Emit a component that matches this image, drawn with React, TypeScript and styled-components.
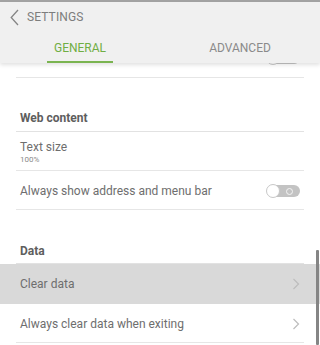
import React from "react";
import styled, { createGlobalStyle } from "styled-components";

const Global = createGlobalStyle`
  html, body { margin: 0; padding: 0; background: #ffffff; }
  body { width: 320px; height: 345px; overflow: hidden; font-family: Roboto, "Noto Sans", Arial, sans-serif; }
  * { box-sizing: border-box; }
`;

const Screen = styled.div`
  position: relative;
  width: 320px;
  height: 345px;
  display: flex;
  flex-direction: column;
  overflow: hidden;
  background: #ffffff;
`;

const StatusEdge = styled.div`
  height: 2px;
  background: #a3a3a3;
  flex: none;
`;

const Header = styled.header`
  position: relative;
  z-index: 2;
  flex: none;
  height: 61px;
  background: #f0f0f0;
  display: flex;
  flex-direction: column;
  box-shadow: 0 2px 4px rgba(0, 0, 0, 0.12);
`;

const TitleBar = styled.div`
  height: 30px;
  display: flex;
  align-items: center;
  padding-left: 10px;
  gap: 8px;
  color: #7d7d7d;
  font-size: 12px;
  letter-spacing: 0.1px;
`;

const Tabs = styled.nav`
  flex: 1;
  display: grid;
  grid-template-columns: 1fr 1fr;
`;

const Tab = styled.div`
  display: flex;
  justify-content: center;
`;

const TabLabel = styled.span<{ $active?: boolean }>`
  display: flex;
  align-items: center;
  padding: 2px 7px 0;
  font-size: 12px;
  color: ${(p) => (p.$active ? "#70ae44" : "#8a8a8a")};
  border-bottom: 2px solid ${(p) => (p.$active ? "#7ab450" : "transparent")};
`;

const List = styled.main`
  flex: 1;
  display: flex;
  flex-direction: column;
  overflow: hidden;
`;

const Row = styled.div<{ $highlight?: boolean }>`
  flex: none;
  background: ${(p) => (p.$highlight ? "#d9d9d9" : "transparent")};
  display: flex;
  padding-right: 4px;
`;

const RowInner = styled.div<{ $height: number; $noBorder?: boolean; $clip?: boolean }>`
  flex: 1;
  margin: 0 12px 0 16px;
  padding: ${(p) => (p.$clip ? "0" : p.$noBorder ? "1px" : "2px")} 4px 0;
  height: ${(p) => p.$height}px;
  display: flex;
  align-items: ${(p) => (p.$clip ? "flex-end" : "center")};
  overflow: hidden;
  border-bottom: 1px solid ${(p) => (p.$noBorder ? "transparent" : "#e6e6e6")};
`;

const ClipContent = styled.div`
  flex: 1;
  height: 38px;
  flex-shrink: 0;
  display: flex;
  align-items: center;
  justify-content: space-between;
`;

const SectionInner = styled.div<{ $pb: number }>`
  flex: 1;
  margin: 0 12px 0 16px;
  padding: 0 4px ${(p) => p.$pb}px;
  height: 54px;
  display: flex;
  align-items: flex-end;
  border-bottom: 1px solid #e2e2e2;
  font-size: 12px;
  line-height: 14px;
  font-weight: 700;
  color: #5e5e5e;
`;

const TextBlock = styled.div`
  flex: 1;
  display: flex;
  flex-direction: column;
`;

const Title = styled.span`
  font-size: 12px;
  line-height: 15px;
  color: #6e6e6e;
`;

const Sub = styled.span`
  font-size: 8px;
  line-height: 10px;
  color: #8a8a8a;
`;

const Track = styled.div`
  width: 33px;
  height: 12px;
  border-radius: 6px;
  background: #c3c3c3;
  display: flex;
  align-items: center;
  justify-content: space-between;
  padding-right: 7px;
  flex: none;
`;

const Knob = styled.div`
  width: 14px;
  height: 14px;
  margin-left: -1px;
  border-radius: 50%;
  background: #ffffff;
  border: 1px solid #c8c8c8;
`;

const Ring = styled.div`
  width: 7px;
  height: 7px;
  border-radius: 50%;
  border: 1.5px solid #f4f4f4;
`;

const Scrollbar = styled.div`
  position: absolute;
  right: 1px;
  top: 250px;
  bottom: 0;
  width: 3px;
  background: #858585;
  border-radius: 1px;
`;

const Toggle = () => (
  <Track>
    <Knob />
    <Ring />
  </Track>
);

const Chevron = () => (
  <svg width="8" height="12" viewBox="0 0 8 12" fill="none">
    <polyline points="1.5,1 6.5,6 1.5,11" stroke="#bdbdbd" strokeWidth="1.2" />
  </svg>
);

const BackIcon = () => (
  <svg width="9" height="17" viewBox="0 0 9 17" fill="none">
    <polyline points="8,1 1.2,8.5 8,16" stroke="#858585" strokeWidth="1.3" />
  </svg>
);

export default function App() {
  return (
    <>
      <Global />
      <Screen>
        <StatusEdge />
        <Header>
          <TitleBar>
            <BackIcon />
            <span>SETTINGS</span>
          </TitleBar>
          <Tabs>
            <Tab>
              <TabLabel $active>GENERAL</TabLabel>
            </Tab>
            <Tab>
              <TabLabel>ADVANCED</TabLabel>
            </Tab>
          </Tabs>
        </Header>
        <List>
          <Row>
            <RowInner $height={15} $clip>
              <ClipContent>
                <Title>Auto fit</Title>
                <Toggle />
              </ClipContent>
            </RowInner>
          </Row>
          <Row>
            <SectionInner $pb={6}>Web content</SectionInner>
          </Row>
          <Row>
            <RowInner $height={39}>
              <TextBlock>
                <Title>Text size</Title>
                <Sub>100%</Sub>
              </TextBlock>
            </RowInner>
          </Row>
          <Row>
            <RowInner $height={39}>
              <TextBlock>
                <Title>Always show address and menu bar</Title>
              </TextBlock>
              <Toggle />
            </RowInner>
          </Row>
          <Row>
            <SectionInner $pb={5}>Data</SectionInner>
          </Row>
          <Row $highlight>
            <RowInner $height={40} $noBorder>
              <TextBlock>
                <Title>Clear data</Title>
              </TextBlock>
              <Chevron />
            </RowInner>
          </Row>
          <Row>
            <RowInner $height={39}>
              <TextBlock>
                <Title>Always clear data when exiting</Title>
              </TextBlock>
              <Chevron />
            </RowInner>
          </Row>
        </List>
        <Scrollbar />
      </Screen>
    </>
  );
}
